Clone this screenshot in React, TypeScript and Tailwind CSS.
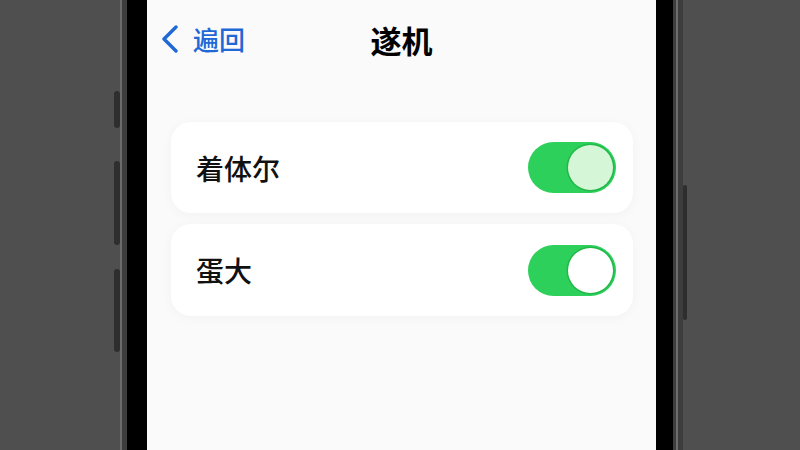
import React, { useState } from 'react';

const Toggle: React.FC<{ on: boolean; pale?: boolean; onChange: () => void }> = ({ on, pale, onChange }) => (
  <button
    onClick={onChange}
    className={`flex h-[51px] w-[88px] items-center rounded-full p-[3px] ${on ? 'justify-end bg-[#2dd05a]' : 'justify-start bg-[#e5e5ea]'}`}
  >
    <span className={`block h-[45px] w-[45px] rounded-full shadow-[0_0_0_1.5px_#22b84a] ${pale ? 'bg-[#d5f7d7]' : 'bg-white'}`} />
  </button>
);

const App: React.FC = () => {
  const [first, setFirst] = useState(true);
  const [second, setSecond] = useState(true);

  return (
    <div className="flex h-[450px] w-[800px] overflow-hidden bg-[#4f4f4f] font-['Noto_Sans_CJK_SC','Noto_Sans',sans-serif]">
      {/* left side of phone */}
      <div className="flex w-[120px] flex-col items-end pt-[91px]">
        <div className="h-[37px] w-[6px] rounded-sm bg-[#2e2e2e]" />
        <div className="mt-[33px] h-[84px] w-[6px] rounded-sm bg-[#2e2e2e]" />
        <div className="mt-[24px] h-[83px] w-[6px] rounded-sm bg-[#2e2e2e]" />
      </div>
      <div className="w-[2px] bg-[#6c6c6c]" />
      <div className="w-[5px] bg-[#3d3d3d]" />
      <div className="w-[20px] bg-black" />

      {/* screen */}
      <div className="flex w-[509px] flex-col bg-[#fafafb]">
        <div className="relative flex h-[80px] items-center px-[12px] pb-[2px]">
          <button className="flex items-center gap-[12px] text-[#1f68d6]">
            <svg width="22" height="28" viewBox="0 0 22 28" fill="none">
              <path d="M17 2 L5 14 L17 26" stroke="#1f68d6" strokeWidth="3.4" strokeLinecap="round" strokeLinejoin="round" />
            </svg>
            <span className="text-[26px] font-medium leading-none">遍回</span>
          </button>
          <div className="absolute inset-x-0 text-center text-[31px] font-bold leading-none text-black">遂机</div>
        </div>

        <div className="mt-[42px] flex flex-col gap-[11px] px-[24px] pr-[23px]">
          <div className="flex h-[91px] items-center justify-between rounded-[20px] bg-white pl-[25px] pr-[17px] shadow-[0_2px_12px_rgba(0,0,0,0.035)]">
            <span className="text-[28px] font-medium text-[#111]">着体尔</span>
            <Toggle on={first} pale onChange={() => setFirst(!first)} />
          </div>
          <div className="flex h-[92px] items-center justify-between rounded-[20px] bg-white pl-[25px] pr-[17px] shadow-[0_2px_12px_rgba(0,0,0,0.035)]">
            <span className="text-[28px] font-medium text-[#111]">蛋大</span>
            <Toggle on={second} onChange={() => setSecond(!second)} />
          </div>
        </div>
      </div>

      {/* right side of phone */}
      <div className="w-[17px] bg-black" />
      <div className="w-[3px] bg-[#3d3d3d]" />
      <div className="w-[2px] bg-[#6c6c6c]" />
      <div className="w-[5px] bg-[#3d3d3d]" />
      <div className="flex flex-1 flex-col pt-[185px]">
        <div className="h-[135px] w-[4px] rounded-sm bg-[#2e2e2e]" />
      </div>
    </div>
  );
};

export default App;
